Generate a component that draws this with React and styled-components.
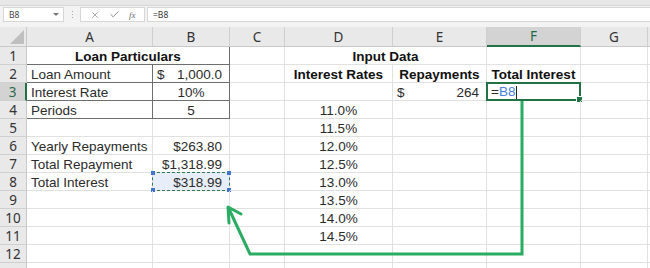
import React from 'react';
import styled, { createGlobalStyle } from 'styled-components';
import { X, Check } from 'lucide-react';

const GlobalStyle = createGlobalStyle`
  html, body {
    margin: 0;
    padding: 0;
    background: #fff;
    overflow: hidden;
  }
  body {
    font-family: "Liberation Sans", Arial, sans-serif;
  }
`;

const Window = styled.div`
  width: 650px;
  height: 268px;
  overflow: hidden;
  position: relative;
  background: #fff;
`;

const FormulaBar = styled.div`
  height: 27px;
  box-sizing: border-box;
  display: flex;
  align-items: flex-start;
  padding: 7px 0 0 3px;
  background: linear-gradient(#e7e7e7 0 5px, #d6d6d6 5px 6px, #f3f3f3 6px);
`;

const NameBox = styled.div`
  width: 61px;
  height: 15px;
  box-sizing: border-box;
  background: #fff;
  border: 1px solid #d6d6d6;
  display: flex;
  align-items: center;
  justify-content: space-between;
  padding: 0 4px 0 5px;
  font-family: "Noto Sans", sans-serif;
  font-size: 8.5px;
  color: #444;
`;

const Caret = styled.span`
  width: 0;
  height: 0;
  border-left: 3px solid transparent;
  border-right: 3px solid transparent;
  border-top: 3px solid #777;
`;

const Dots = styled.div`
  width: 16px;
  height: 15px;
  display: flex;
  flex-direction: column;
  align-items: center;
  justify-content: center;
  gap: 2px;
  span {
    width: 1px;
    height: 1px;
    background: #aaa;
  }
`;

const IconBox = styled.div`
  width: 65px;
  height: 15px;
  box-sizing: border-box;
  background: #fff;
  border: 1px solid #d6d6d6;
  display: flex;
  align-items: center;
  justify-content: space-around;
  padding: 0 4px;
  color: #7a7a7a;
`;

const Fx = styled.span`
  font-family: "Liberation Serif", serif;
  font-style: italic;
  font-size: 9px;
  color: #6a6a6a;
`;

const FormulaInput = styled.div`
  flex: 1;
  height: 15px;
  margin-left: 2px;
  box-sizing: border-box;
  background: #fff;
  border: 1px solid #d6d6d6;
  border-right: none;
  display: flex;
  align-items: center;
  padding-left: 5px;
  font-family: "Noto Sans", sans-serif;
  font-size: 8.5px;
  color: #333;
`;

const Sheet = styled.div`
  display: grid;
  grid-template-columns: 27px 126px 77px 55px 108px 94px 94px 67px 1fr;
  grid-template-rows: 20px;
  grid-auto-rows: 18px;
  position: relative;
`;

const Corner = styled.div`
  box-sizing: border-box;
  background: #e9e9e9;
  border-right: 1px solid #c8c8c8;
  border-bottom: 1px solid #c8c8c8;
  display: flex;
  align-items: flex-end;
  justify-content: flex-end;
  padding: 0 2px 2px 0;
`;

const Triangle = styled.span`
  width: 0;
  height: 0;
  border-left: 14px solid transparent;
  border-bottom: 14px solid #bfbfbf;
`;

const ColHeader = styled.div`
  box-sizing: border-box;
  background: ${p => (p.$active ? '#d3d3d3' : '#e9e9e9')};
  border-right: 1px solid #cfcfcf;
  border-bottom: ${p => (p.$active ? '2px solid #217346' : '1px solid #c8c8c8')};
  display: flex;
  align-items: center;
  justify-content: center;
  font-family: "Noto Sans", sans-serif;
  font-size: 13.5px;
  color: ${p => (p.$active ? '#1f6b45' : '#333')};
`;

const RowHeader = styled.div`
  box-sizing: border-box;
  background: ${p => (p.$active ? '#d3d3d3' : '#e9e9e9')};
  border-right: ${p => (p.$active ? '2px solid #217346' : '1px solid #c8c8c8')};
  border-bottom: 1px solid #d0d0d0;
  display: flex;
  align-items: center;
  justify-content: center;
  font-family: "Noto Sans", sans-serif;
  font-size: 13.5px;
  color: ${p => (p.$active ? '#2d6a4a' : '#333')};
`;

const justify = { left: 'flex-start', center: 'center', right: 'flex-end' };

const Cell = styled.div`
  grid-column: span ${p => p.$span || 1};
  box-sizing: border-box;
  position: relative;
  border-right: 1px solid ${p => (p.$dr ? '#6e6e6e' : '#e1e1e1')};
  border-bottom: 1px solid ${p => (p.$db ? '#6e6e6e' : '#e1e1e1')};
  background: ${p => (p.$ref ? '#e8eef9' : 'transparent')};
  padding: 1px ${p => (p.$align === 'right' || p.$acct ? '7px' : '4px')} 0 4px;
  display: flex;
  align-items: center;
  justify-content: ${p => (p.$acct ? 'space-between' : justify[p.$align || 'left'])};
  font-size: 13.5px;
  font-weight: ${p => (p.$bold ? 700 : 400)};
  color: ${p => (p.$bold ? '#111' : '#2b2b2b')};
  white-space: nowrap;
`;

const ActiveFrame = styled.div`
  position: absolute;
  left: -1px;
  top: -1px;
  right: -1px;
  bottom: -1px;
  border: 2px solid #217346;
  pointer-events: none;
`;

const Handle = styled.span`
  position: absolute;
  right: -4px;
  bottom: -4px;
  width: 5px;
  height: 5px;
  background: #217346;
  border: 1px solid #fff;
`;

const RefFrame = styled.div`
  position: absolute;
  left: -1px;
  top: -1px;
  right: -1px;
  bottom: -1px;
  border: 1px dashed #2f7a55;
  pointer-events: none;
`;

const RefCorner = styled.span`
  position: absolute;
  width: 4px;
  height: 4px;
  background: #3f74d0;
  ${p => (p.$top ? 'top: -2px;' : 'bottom: -2px;')}
  ${p => (p.$left ? 'left: -2px;' : 'right: -2px;')}
`;

const Ref = styled.span`
  color: #4a7fd8;
`;

const Cursor = styled.span`
  display: inline-block;
  width: 1px;
  height: 14px;
  background: #222;
  margin-left: 1px;
  vertical-align: middle;
`;

const ArrowLayer = styled.svg`
  position: absolute;
  left: 0;
  top: 0;
  pointer-events: none;
`;

const COLS = ['A', 'B', 'C', 'D', 'E', 'F', 'G', ''];

const loan = { dr: true, db: true };

const rows = [
  [
    { text: 'Loan Particulars', span: 2, bold: true, align: 'center', ...loan },
    {},
    { text: 'Input Data', span: 2, bold: true, align: 'center' },
    {}, {}, {},
  ],
  [
    { text: 'Loan Amount', ...loan },
    { acct: ['$', '1,000.0'], ...loan },
    {},
    { text: 'Interest Rates', bold: true, align: 'center' },
    { text: 'Repayments', bold: true, align: 'center' },
    { text: 'Total Interest', bold: true, align: 'center' },
    {}, {},
  ],
  [
    { text: 'Interest Rate', ...loan },
    { text: '10%', align: 'center', ...loan },
    {},
    {},
    { acct: ['$', '264'] },
    { active: true },
    {}, {},
  ],
  [
    { text: 'Periods', ...loan },
    { text: '5', align: 'center', ...loan },
    {},
    { text: '11.0%', align: 'center' },
    {}, {}, {}, {},
  ],
  [{}, {}, {}, { text: '11.5%', align: 'center' }, {}, {}, {}, {}],
  [
    { text: 'Yearly Repayments' },
    { text: '$263.80', align: 'right' },
    {},
    { text: '12.0%', align: 'center' },
    {}, {}, {}, {},
  ],
  [
    { text: 'Total Repayment' },
    { text: '$1,318.99', align: 'right' },
    {},
    { text: '12.5%', align: 'center' },
    {}, {}, {}, {},
  ],
  [
    { text: 'Total Interest' },
    { text: '$318.99', align: 'right', ref: true },
    {},
    { text: '13.0%', align: 'center' },
    {}, {}, {}, {},
  ],
  [{}, {}, {}, { text: '13.5%', align: 'center' }, {}, {}, {}, {}],
  [{}, {}, {}, { text: '14.0%', align: 'center' }, {}, {}, {}, {}],
  [{}, {}, {}, { text: '14.5%', align: 'center' }, {}, {}, {}, {}],
  [{}, {}, {}, {}, {}, {}, {}, {}],
  [{}, {}, {}, {}, {}, {}, {}, {}],
];

// the last row is only a sliver at the bottom edge, its number is not visible
const visibleRows = 12;

function SheetCell({ cell }) {
  return (
    <Cell
      $span={cell.span}
      $bold={cell.bold}
      $align={cell.align}
      $acct={!!cell.acct}
      $dr={cell.dr}
      $db={cell.db}
      $ref={cell.ref}
    >
      {cell.acct ? (
        <>
          <span>{cell.acct[0]}</span>
          <span>{cell.acct[1]}</span>
        </>
      ) : (
        cell.text
      )}
      {cell.active && (
        <>
          <span>
            =<Ref>B8</Ref>
            <Cursor />
          </span>
          <ActiveFrame>
            <Handle />
          </ActiveFrame>
        </>
      )}
      {cell.ref && (
        <RefFrame>
          <RefCorner $top $left />
          <RefCorner $top />
          <RefCorner $left />
          <RefCorner />
        </RefFrame>
      )}
    </Cell>
  );
}

export default function App() {
  return (
    <Window>
      <GlobalStyle />
      <FormulaBar>
        <NameBox>
          B8
          <Caret />
        </NameBox>
        <Dots>
          <span />
          <span />
          <span />
        </Dots>
        <IconBox>
          <X size={10} strokeWidth={1.5} />
          <Check size={11} strokeWidth={1.8} />
          <Fx>fx</Fx>
        </IconBox>
        <FormulaInput>=B8</FormulaInput>
      </FormulaBar>

      <Sheet>
        <Corner>
          <Triangle />
        </Corner>
        {COLS.map((c, i) => (
          <ColHeader key={i} $active={c === 'F'}>
            {c}
          </ColHeader>
        ))}
        {rows.map((row, r) => (
          <React.Fragment key={r}>
            <RowHeader $active={r === 2}>{r < visibleRows ? r + 1 : ''}</RowHeader>
            {row.map((cell, i) => (
              <SheetCell key={i} cell={cell} />
            ))}
          </React.Fragment>
        ))}
      </Sheet>

      <ArrowLayer width="650" height="268" viewBox="0 0 650 268">
        <polyline
          points="522,101 522,254 250,254 229,209"
          fill="none"
          stroke="#2aad62"
          strokeWidth="3"
          strokeLinejoin="miter"
        />
        <polyline
          points="229,223 228,207 241,214"
          fill="none"
          stroke="#2aad62"
          strokeWidth="3"
          strokeLinecap="round"
          strokeLinejoin="round"
        />
      </ArrowLayer>
    </Window>
  );
}
